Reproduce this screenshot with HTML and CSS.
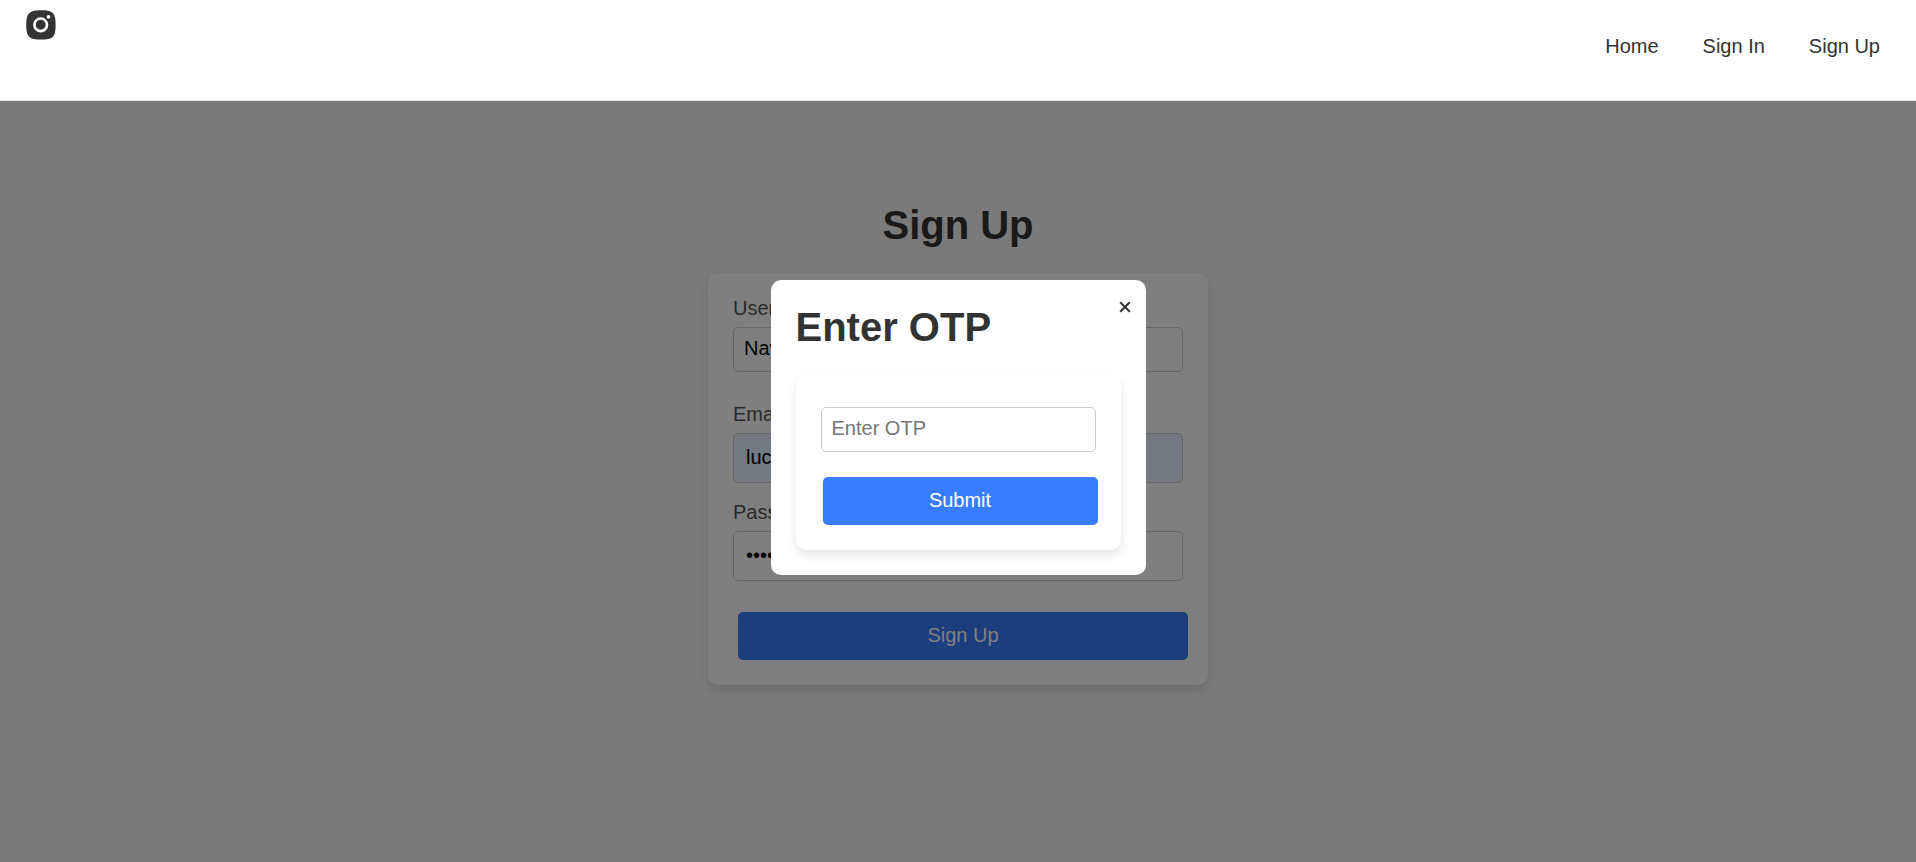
FILE: index.html
```html
<!DOCTYPE html>
<html lang="en">
<head>
  <meta charset="utf-8">
  <meta name="viewport" content="width=device-width, initial-scale=1">
  <title>Sign Up</title>
  <link rel="stylesheet" href="styles.css">
</head>
<body>
  <header class="header">
    <a class="logo" href="#" aria-label="Home page">
      <svg viewBox="0 0 30 30" width="30" height="30" aria-hidden="true">
        <path fill="#333" d="M15 0.2C26.500 0.200 29.600 2.500 29.600 15S26.500 29.600 15 29.600 0.200 27 0.200 15 3.500 0.200 15 0.200Z"/>
        <circle cx="14.700" cy="14.800" r="6.300" fill="none" stroke="#fff" stroke-width="2.600"/>
        <circle cx="22.500" cy="6.900" r="1.800" fill="#fff"/>
      </svg>
    </a>
    <nav class="nav">
      <a class="nav-link" href="#">Home</a>
      <a class="nav-link" href="#">Sign In</a>
      <a class="nav-link" href="#">Sign Up</a>
    </nav>
  </header>

  <main class="main">
    <h1 class="title">Sign Up</h1>
    <form class="card signup">
      <div class="field field-username">
        <label class="label" for="username">Username</label>
        <input class="input" id="username" type="text" value="Nav">
      </div>
      <div class="field">
        <label class="label" for="email">Email</label>
        <input class="input input-tall input-filled" id="email" type="email" value="luc">
      </div>
      <div class="field">
        <label class="label" for="password">Password</label>
        <input class="input input-tall" id="password" type="password" value="password">
      </div>
      <button class="button signup-button" type="submit">Sign Up</button>
    </form>

    <div class="overlay">
      <section class="modal" role="dialog" aria-labelledby="otp-title">
        <button class="close" type="button" aria-label="Close">
          <svg viewBox="0 0 12 12" width="12" height="12" aria-hidden="true">
            <path d="M1.2 1.2L10.8 10.8M10.8 1.2L1.200 10.800" stroke="#333" stroke-width="2" fill="none"/>
          </svg>
        </button>
        <h2 class="title" id="otp-title">Enter OTP</h2>
        <form class="card otp">
          <input class="input" type="text" placeholder="Enter OTP" aria-label="Enter OTP">
          <button class="button otp-button" type="submit">Submit</button>
        </form>
      </section>
    </div>
  </main>
</body>
</html>
```

FILE: styles.css
```css
* {
  box-sizing: border-box;
}

body {
  margin: 0;
  min-height: 100vh;
  display: flex;
  flex-direction: column;
  background: #f4f4f4;
  color: #333;
  font-family: "Liberation Sans", Arial, sans-serif;
  font-size: 20px;
  line-height: 24px;
}

.header {
  display: flex;
  justify-content: space-between;
  align-items: flex-start;
  min-height: 101px;
  padding: 10px 36px 10px 26px;
  background: #fff;
  border-bottom: 1px solid #ddd;
}

.logo {
  display: flex;
}

.nav {
  display: flex;
  gap: 44px;
  padding-top: 24px;
}

.nav-link {
  color: #333;
  text-decoration: none;
}

.main {
  position: relative;
  flex: 1;
  display: flex;
  flex-direction: column;
  align-items: center;
  padding: 102px 20px 40px;
}

.title {
  margin: 0 0 26px;
  font-size: 40px;
  font-weight: bold;
  line-height: 44px;
}

.card {
  display: flex;
  flex-direction: column;
  padding: 25px;
  background: #fff;
  border-radius: 10px;
  box-shadow: 0 5px 10px rgba(0, 0, 0, 0.1);
}

.signup {
  width: 100%;
  max-width: 500px;
}

.field {
  display: flex;
  flex-direction: column;
  gap: 8px;
  margin-bottom: 19px;
}

.field-username {
  margin-bottom: 32px;
}

.label {
  color: #555;
  line-height: 21px;
}

.input {
  width: 100%;
  height: 45px;
  padding: 0 10px 2px;
  border: 1px solid #ccc;
  border-radius: 5px;
  background: #fff;
  color: #000;
  font: inherit;
}

.input::placeholder {
  color: #757575;
}

.input-tall {
  height: 50px;
  padding: 0 12px 2px;
}

.input-filled {
  background: #e8f0fe;
}

.button {
  height: 48px;
  padding: 0 20px 2px;
  border: 0;
  border-radius: 5px;
  background: #387dff;
  color: #fff;
  font: inherit;
  cursor: pointer;
}

.signup-button {
  margin: 12px -5px 0 5px;
}

.overlay {
  position: absolute;
  inset: 0;
  display: flex;
  justify-content: center;
  align-items: flex-start;
  padding-top: 179px;
  background: rgba(0, 0, 0, 0.5);
}

.modal {
  position: relative;
  width: 375px;
  padding: 25px;
  background: #fff;
  border-radius: 10px;
}

.close {
  position: absolute;
  top: 16px;
  right: 10px;
  display: flex;
  padding: 5px;
  border: 0;
  background: none;
  cursor: pointer;
}

.otp {
  gap: 25px;
  padding-top: 32px;
}

.otp-button {
  margin: 0 -2px 0 2px;
}
```
